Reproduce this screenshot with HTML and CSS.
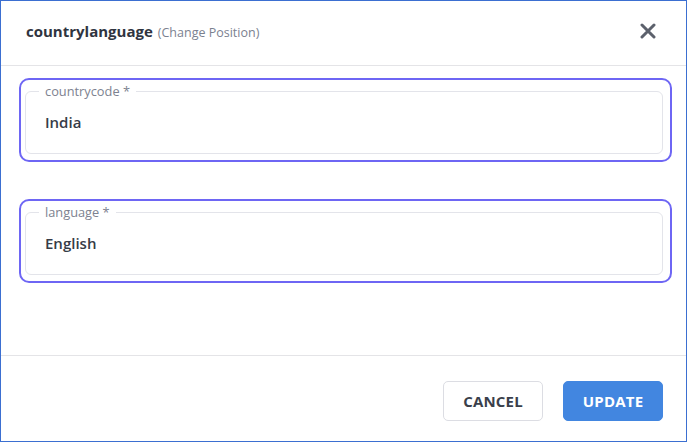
FILE: index.html
```html
<!DOCTYPE html>
<html>
<head>
<meta charset="utf-8">
<link rel="stylesheet" href="styles.css">
</head>
<body>
<div class="dialog">
  <div class="header">
    <div class="title"><span class="name">countrylanguage</span><span class="sub">(Change Position)</span></div>
    <button class="close" aria-label="close">
      <svg width="16" height="16" viewBox="0 0 16 16"><path d="M2 2 L14 14 M14 2 L2 14" stroke="#5c616c" stroke-width="3" stroke-linecap="round"/></svg>
    </button>
  </div>
  <div class="body">
    <div class="field">
      <fieldset class="box">
        <legend>countrycode *</legend>
        <div class="value">India</div>
      </fieldset>
    </div>
    <div class="field">
      <fieldset class="box">
        <legend>language *</legend>
        <div class="value">English</div>
      </fieldset>
    </div>
  </div>
  <div class="footer">
    <button class="btn cancel">CANCEL</button>
    <button class="btn update">UPDATE</button>
  </div>
</div>
</body>
</html>
```
FILE: styles.css
```css
* { box-sizing: border-box; }
html, body { margin: 0; padding: 0; background: #fff; }
body { font-family: "Open Sans", "Noto Sans", sans-serif; }
.dialog {
  width: 687px;
  height: 442px;
  border: 1px solid #3b6fd1;
  display: flex;
  flex-direction: column;
}
.header {
  height: 65px;
  border-bottom: 1px solid #e4e4e7;
  display: flex;
  align-items: center;
  justify-content: space-between;
  padding: 0 30px 0 25px;
}
.title { display: flex; align-items: baseline; gap: 5px; margin-top: -4px; }
.name { font-size: 15px; font-weight: 700; color: #2f3440; }
.sub { font-size: 12.5px; color: #7b8190; }
.close { border: 0; background: none; padding: 0; width: 16px; height: 16px; display: flex; margin-top: -5px; }
.body {
  flex: 1;
  padding: 12px 14px 0 18px;
  display: flex;
  flex-direction: column;
  gap: 37px;
}
.field {
  border: 2px solid #6e66f4;
  border-radius: 10px;
  padding: 3px 7px 5px 4px;
  height: 84px;
}
.box {
  margin: 0;
  border: 1px solid #e3e4ea;
  border-radius: 6px;
  padding: 0 19px;
  height: 71px;
}
.box legend {
  font-size: 12.8px;
  font-weight: 500;
  color: #7d8290;
  padding: 0 6px;
  margin-left: -6px;
  line-height: 17px;
}
.value {
  font-size: 15px;
  font-weight: 560;
  color: #363b47;
  line-height: 20px;
  margin-top: 12px;
}
.footer {
  height: 86px;
  border-top: 1px solid #e4e4e7;
  display: flex;
  justify-content: flex-end;
  align-items: flex-start;
  gap: 20px;
  padding: 25px 23px 0 0;
}
.btn {
  width: 100px;
  height: 40px;
  border-radius: 5px;
  font-family: "Open Sans", "Noto Sans", sans-serif;
  font-size: 15px;
  font-weight: 700;
  letter-spacing: 0.2px;
}
.cancel { background: #fff; border: 1px solid #dcdde3; color: #3a3f4b; }
.update { background: #4286e0; border: 1px solid #4286e0; color: #fff; }
```
